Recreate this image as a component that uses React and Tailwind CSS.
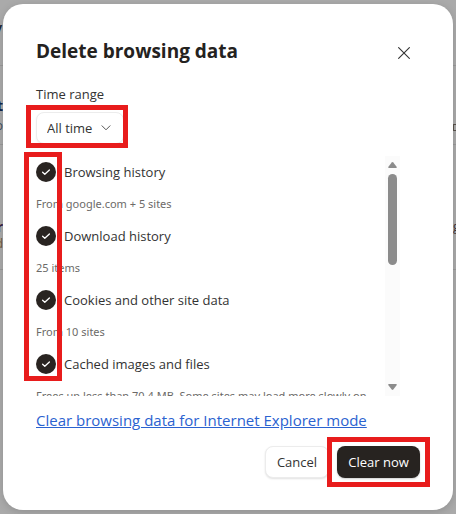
import React from "react";

const items = [
  { id: "browsing", label: "Browsing history", detail: "From google.com + 5 sites" },
  { id: "downloads", label: "Download history", detail: "25 items" },
  { id: "cookies", label: "Cookies and other site data", detail: "From 10 sites" },
  {
    id: "cache",
    label: "Cached images and files",
    detail: "Frees up less than 70.4 MB. Some sites may load more slowly on",
  },
];

// Red annotation frame drawn around a part of the dialog
function Highlight({ className }) {
  return (
    <div
      aria-hidden="true"
      className={`pointer-events-none absolute border-5 border-[#e81c1c] ${className}`}
    />
  );
}

function DataItem({ id, label, detail }) {
  return (
    <li>
      <div className="flex h-8 items-center gap-2">
        <span className="grid size-5 shrink-0 place-items-center">
          <input
            id={id}
            type="checkbox"
            defaultChecked
            className="col-start-1 row-start-1 size-5 appearance-none rounded-full bg-[#292421]"
          />
          <svg
            viewBox="0 0 10 10"
            className="pointer-events-none col-start-1 row-start-1 size-[10px]"
            fill="none"
            stroke="#fff"
            strokeWidth="1.3"
            strokeLinecap="round"
            strokeLinejoin="round"
          >
            <path d="M1.6 5.3 3.8 7.3 8.4 3" />
          </svg>
        </span>
        <label htmlFor={id} className="text-[13px] leading-5 whitespace-nowrap">
          {label}
        </label>
      </div>
      <p className="flex h-8 items-center font-['Noto_Sans',sans-serif] text-[11px] leading-4 whitespace-nowrap text-[#6c6a68]">
        {detail}
      </p>
    </li>
  );
}

function Scrollbar() {
  return (
    <div aria-hidden="true" className="flex w-[15px] shrink-0 flex-col items-center bg-[#fbfbfb] py-[6px]">
      <svg viewBox="0 0 9 6" className="h-[6px] w-[9px]" fill="#8b8b8b">
        <path d="M3.7.5Q4.5-.4 5.3.5L8.8 5Q9 6 8 6H1Q0 6 .2 5Z" />
      </svg>
      <div className="mt-[6px] h-[91px] w-[9px] rounded-full bg-[#8b8b8b]" />
      <svg viewBox="0 0 9 6" className="mt-auto h-[6px] w-[9px]" fill="#8b8b8b">
        <path d="M3.7 5.5Q4.5 6.4 5.3 5.5L8.8 1Q9 0 8 0H1Q0 0 .2 1Z" />
      </svg>
    </div>
  );
}

// Dimmed settings page that shows past the edges of the dialog
function Backdrop() {
  return (
    <div aria-hidden="true" className="absolute inset-0 overflow-hidden bg-[#aaaaaa]">
      <div className="absolute inset-x-0 top-[65px] h-20 border-y border-[#999]" />
      <div className="absolute inset-x-0 top-[269px] border-t border-[#999]" />
      <span className="absolute top-5 right-full -mr-[2px] text-xs font-bold text-[#1d2733]">y</span>
      <span className="absolute top-24 right-full -mr-[3px] text-sm font-bold text-[#10244a]">t</span>
      <span className="absolute top-[118px] right-full -mr-[3px] text-xs text-[#3a4a5c]">o</span>
      <span className="absolute top-[217px] right-full -mr-[3px] text-sm font-bold text-[#3a2040]">r</span>
      <span className="absolute top-[236px] right-full -mr-[3px] text-xs text-[#70583a]">d</span>
      <div className="absolute top-[124px] left-full -ml-[3px] size-[7px] border border-[#5a534c]" />
      <span className="absolute top-[219px] left-full -ml-[3px] text-xs text-[#3a2f35]">g</span>
    </div>
  );
}

export default function App() {
  return (
    <div className="relative min-h-screen px-[3px] py-1 font-['Open_Sans','Noto_Sans',sans-serif] text-[#333]">
      <Backdrop />
      <section
        role="dialog"
        aria-labelledby="dialog-title"
        className="relative rounded-[20px] bg-white px-[33px] pt-[33px] pb-8 shadow-[0_2px_8px_rgba(0,0,0,0.15)]"
      >
        <header className="flex items-start justify-between">
          <h1 id="dialog-title" className="text-[19px] leading-7 font-bold whitespace-nowrap text-[#242220]">
            Delete browsing data
          </h1>
          <button type="button" aria-label="Close" className="grid size-8 place-items-center">
            <svg viewBox="0 0 12 12" className="size-3" fill="none" stroke="#333" strokeWidth="1.1">
              <path d="M.3.3 11.7 11.7M11.7.3.3 11.7" />
            </svg>
          </button>
        </header>

        <label htmlFor="time-range" className="mt-[15px] block text-[13px] leading-5">
          Time range
        </label>
        <div className="relative mt-2 grid w-fit items-center">
          <select
            id="time-range"
            defaultValue="all"
            className="col-start-1 row-start-1 h-8 w-[88px] appearance-none rounded-lg border border-[#ececec] bg-white pl-[10px] text-[13px] leading-5 shadow-[0_1px_2px_rgba(0,0,0,0.06)]"
          >
            <option value="all">All time</option>
          </select>
          <svg
            viewBox="0 0 10 6"
            className="pointer-events-none col-start-1 row-start-1 mr-[13px] h-[6px] w-[10px] justify-self-end"
            fill="none"
            stroke="#555"
            strokeLinecap="round"
            strokeLinejoin="round"
          >
            <path d="M1 .8 5 4.8 9 .8" />
          </svg>
          <Highlight className="-top-[7px] -right-1 -bottom-1 -left-[10px]" />
        </div>

        <div className="relative mt-3 mr-5">
          <div className="flex h-60 overflow-hidden">
            <ul className="min-w-0 flex-1">
              {items.map((item) => (
                <DataItem key={item.id} {...item} />
              ))}
            </ul>
            <Scrollbar />
          </div>
          <Highlight className="-top-1 bottom-[15px] -left-3 w-[38px]" />
        </div>

        <a href="#ie-mode" className="mt-3 block w-fit text-[15px] leading-6 whitespace-nowrap text-[#2b62d0] underline">
          Clear browsing data for Internet Explorer mode
        </a>

        <footer className="mt-[14px] flex justify-end gap-2 text-[13px] leading-5 whitespace-nowrap">
          <button
            type="button"
            className="h-8 w-16 rounded-lg border border-[#ececec] bg-white shadow-[0_1px_2px_rgba(0,0,0,0.12)]"
          >
            Cancel
          </button>
          <div className="relative">
            <button
              type="button"
              className="h-8 w-[83px] rounded-lg bg-[#272320] text-white shadow-[0_1px_2px_rgba(0,0,0,0.2)]"
            >
              Clear now
            </button>
            <Highlight className="-inset-x-[10px] -inset-y-[9px]" />
          </div>
        </footer>
      </section>
    </div>
  );
}
